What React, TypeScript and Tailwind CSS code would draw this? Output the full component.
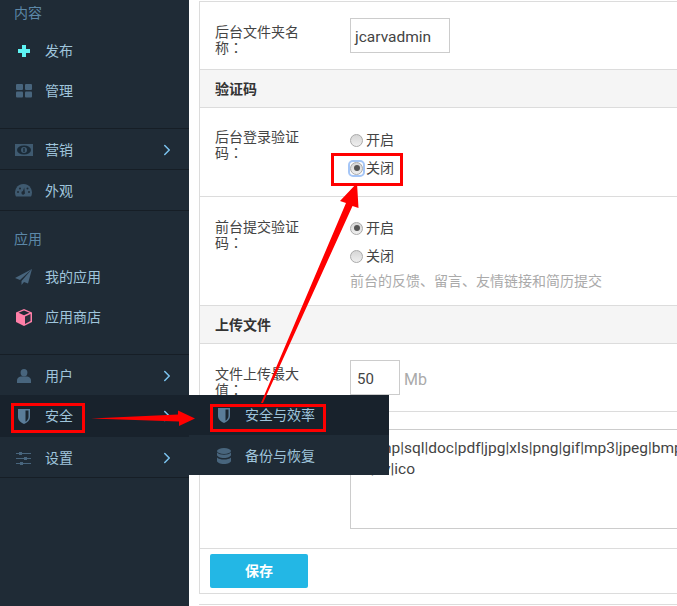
import { ChevronRight } from "lucide-react";
import { ReactNode } from "react";

const FONT = "font-['Roboto','Noto_Sans_CJK_SC',sans-serif]";

const PlusIcon = () => (
  <svg width="14" height="14" viewBox="0 0 14 14">
    <path d="M5 1h4v4h4v4H9v4H5V9H1V5h4z" fill="#5ef3f3" />
  </svg>
);
const GridIcon = () => (
  <svg width="16" height="14" viewBox="0 0 16 14" fill="#48657d">
    <rect x="0" y="0" width="7" height="6" rx="1" />
    <rect x="9" y="0" width="7" height="6" rx="1" />
    <rect x="0" y="7.500" width="7" height="6" rx="1" />
    <rect x="9" y="7.500" width="7" height="6" rx="1" />
  </svg>
);
const MoneyIcon = () => (
  <svg width="18" height="12" viewBox="0 0 18 12">
    <rect width="18" height="12" fill="#3f5a70" />
    <ellipse cx="9" cy="6" rx="7" ry="4.500" fill="#1a2a37" />
    <circle cx="9" cy="6" r="3" fill="#3f5a70" />
    <rect x="8.300" y="4" width="1.400" height="4" fill="#1a2a37" />
  </svg>
);
const GaugeIcon = () => (
  <svg width="17" height="13" viewBox="0 0 17 13">
    <path d="M1 12.500A8.500 8.500 0 1 1 16 12.500z" fill="#3f5a70" />
    <path d="M8 7l1.200-3.500L9.800 8a1.800 1.800 0 1 1-1.800-1z" fill="#1f2b36" />
    <circle cx="3" cy="8" r="1" fill="#1f2b36" />
    <circle cx="5" cy="4.500" r="1" fill="#1f2b36" />
    <circle cx="12.500" cy="4.500" r="1" fill="#1f2b36" />
    <circle cx="14" cy="8" r="1" fill="#1f2b36" />
  </svg>
);
const PlaneIcon = () => (
  <svg width="17" height="16" viewBox="0 0 17 16">
    <path d="M17 0L0 9l5 2zM17 0L6.500 12v4l2.500-3 4 1.500z" fill="#48657d" />
  </svg>
);
const BoxIcon = () => (
  <svg width="16" height="17" viewBox="0 0 16 17">
    <path d="M8 0l8 3.500v9.500l-8 4-8-4V3.500z" fill="#ff7fa8" />
    <path d="M8 1.500l5.500 2.300L8 6.200 2.500 3.800z" fill="#1f2b36" />
    <path d="M9 7.500l5.500-2.400v7L9 15z" fill="#2b2f3c" />
  </svg>
);
const UserIcon = () => (
  <svg width="14" height="14" viewBox="0 0 14 14" fill="#48657d">
    <ellipse cx="7" cy="3.700" rx="3.400" ry="3.700" />
    <path d="M0 14v-2.500C0 9 2.500 7.600 4.500 7.600h5c2 0 4.500 1.400 4.500 3.900V14z" />
  </svg>
);
const ShieldIcon = () => (
  <svg width="12" height="15" viewBox="0 0 12 15">
    <path d="M0 0h12v8C12 11.500 8.500 14 6 15 3.500 14 0 11.500 0 8z" fill="#5a7d99" />
    <path d="M7.500 1.500h3V8c0 2-1.500 3.800-3 4.800z" fill="#1a2630" />
  </svg>
);
const SlidersIcon = () => (
  <svg width="15" height="13" viewBox="0 0 15 13" fill="#48657d">
    <rect y="1" width="15" height="1" />
    <rect x="3" y="0" width="3" height="3" />
    <rect y="6" width="15" height="1" />
    <rect x="8" y="5" width="3" height="3" />
    <rect y="11" width="15" height="1" />
    <rect x="4" y="10" width="3" height="3" />
  </svg>
);
const DatabaseIcon = () => (
  <svg width="14" height="16" viewBox="0 0 14 16" fill="#48657d">
    <ellipse cx="7" cy="3" rx="7" ry="3" />
    <path d="M0 4.600C1.500 6.200 4 6.800 7 6.800s5.500-.6 7-2.200V7c0 1.500-3 3-7 3S0 8.500 0 7z" />
    <path d="M0 9.400C1.500 11 4 11.400 7 11.400s5.500-.4 7-2V13c0 1.500-3 3-7 3s-7-1.500-7-3z" />
  </svg>
);

const NavItem = ({
  icon,
  label,
  arrow,
  className,
}: {
  icon: ReactNode;
  label: string;
  arrow?: boolean;
  className?: string;
}) => (
  <div className={`flex items-center text-sm text-[#9fc5dc] ${className}`}>
    <div className="flex w-[45px] shrink-0 justify-center pl-[2px]">{icon}</div>
    <span>{label}</span>
    {arrow && (
      <ChevronRight
        size={18}
        strokeWidth={2}
        className="ml-auto mr-[13px] text-[#7cc4f0]"
      />
    )}
  </div>
);

const Sidebar = () => (
  <aside className="flex w-[189px] shrink-0 flex-col bg-[#1f2b36]">
    <div className="h-[129px] border-b border-[#161e26]">
      <div className="pl-[14px] pt-[3px] text-sm leading-5 text-[#5c88a8]">内容</div>
      <NavItem icon={<PlusIcon />} label="发布" className="mt-[8px] h-[40px]" />
      <NavItem icon={<GridIcon />} label="管理" className="h-[40px]" />
    </div>
    <NavItem icon={<MoneyIcon />} label="营销" arrow className="h-[41px] border-b border-[#161e26] pt-[1px]" />
    <NavItem icon={<GaugeIcon />} label="外观" className="h-[41px] border-b border-[#161e26] pt-[1px]" />
    <div className="h-[144px] border-b border-[#161e26]">
      <div className="pl-[14px] pt-[18px] text-sm leading-5 text-[#5c88a8]">应用</div>
      <NavItem icon={<PlaneIcon />} label="我的应用" className="mt-[8px] h-[40px]" />
      <NavItem icon={<BoxIcon />} label="应用商店" className="h-[40px]" />
    </div>
    <NavItem icon={<UserIcon />} label="用户" arrow className="h-[40px] pt-[1px]" />
    <NavItem icon={<ShieldIcon />} label="安全" arrow className="h-[42px] bg-[#18222c]" />
    <NavItem icon={<SlidersIcon />} label="设置" arrow className="h-[41px] border-b border-[#161e26] pt-[2px]" />
  </aside>
);

const Radio = ({ label, checked, focus }: { label: string; checked?: boolean; focus?: boolean }) => (
  <div className="flex h-[28px] items-center text-sm text-[#444]">
    <span className={`mr-[3px] flex h-[13px] w-[13px] items-center justify-center rounded-[3px] ${focus ? "outline-2 outline-[#a5c6f7]" : ""}`}>
      <span className="flex h-[13px] w-[13px] items-center justify-center rounded-full border border-[#aaa] bg-linear-to-b from-[#d6d6d6] to-[#efefef]">
        {checked && <span className="h-[6px] w-[6px] rounded-full bg-[#555]" />}
      </span>
    </span>
    {label}
  </div>
);

const Label = ({ first, second, offset }: { first: string; second: string; offset: string }) => (
  <div className={`w-[88px] shrink-0 text-sm leading-[16px] text-[#444] ${offset}`}>
    <div>{first}</div>
    <div>
      {second}
      <span className="font-['Roboto','Noto_Sans_CJK_TC',sans-serif]">：</span>
    </div>
  </div>
);

const SectionHead = ({ children }: { children: ReactNode }) => (
  <div className="flex h-[38px] items-center border-b border-[#dcdcdc] bg-[#f5f5f5] pl-[15px] text-sm font-bold text-[#333]">
    {children}
  </div>
);

const Overlay = () => (
  <>
    <div className="absolute left-[331px] top-[153px] h-[33px] w-[72px] border-[3px] border-[#f00]" />
    <div className="absolute left-[11px] top-[403px] h-[30px] w-[74px] border-[3px] border-[#f00]" />
    <div className="absolute left-[210px] top-[404px] h-[28px] w-[116px] border-[3px] border-[#f00]" />
    <svg className="absolute left-0 top-0" width="677" height="606" viewBox="0 0 677 606">
      <path d="M91 418.500L178 414.500V410.500L195 418.500L179 426V421.500z" fill="#f00" />
      <path d="M261 403L346 203L340 201L357 183L358.500 208L352.500 206L263 403z" fill="#f00" />
    </svg>
  </>
);

export default function App() {
  return (
    <div className={`relative flex h-[606px] w-[677px] overflow-hidden bg-white ${FONT}`}>
      <Sidebar />
      <main className="ml-[10px] min-w-0 flex-1">
        <div className="mt-[1px] h-[593px] border-b border-l border-t border-[#dcdcdc]">
          <div className="flex h-[68px] items-center border-b border-[#dcdcdc] pl-[15px]">
            <Label first="后台文件夹名" second="称" offset="pt-[8px]" />
            <div className="ml-[47px] flex h-[35px] w-[100px] items-center border border-[#ccc] px-[4px] pt-[4px] text-[15.5px] text-[#444]">
              jcarvadmin
            </div>
          </div>
          <SectionHead>验证码</SectionHead>
          <div className="flex h-[89px] border-b border-[#dcdcdc] pl-[15px] pt-[18px]">
            <Label first="后台登录验证" second="码" offset="pt-[3px]" />
            <div className="ml-[47px]">
              <Radio label="开启" />
              <Radio label="关闭" checked focus />
            </div>
          </div>
          <div className="flex h-[109px] border-b border-[#dcdcdc] pl-[15px] pt-[17px]">
            <Label first="前台提交验证" second="码" offset="pt-[5px]" />
            <div className="ml-[47px]">
              <Radio label="开启" checked />
              <Radio label="关闭" />
              <div className="mt-[1px] text-sm leading-5 text-[#aaa]">前台的反馈、留言、友情链接和简历提交</div>
            </div>
          </div>
          <SectionHead>上传文件</SectionHead>
          <div className="flex h-[68px] items-center border-b border-[#dcdcdc] pl-[15px]">
            <Label first="文件上传最大" second="值" offset="pt-[8px]" />
            <div className="ml-[47px] flex h-[35px] w-[50px] items-center border border-[#ccc] px-[6px] pt-[4px] text-[15px] text-[#444]">
              50
            </div>
            <span className="ml-[4px] pt-[4px] text-base text-[#aaa]">Mb</span>
          </div>
          <div className="h-[137px] border-b border-[#dcdcdc] pl-[150px] pt-[17px]">
            <div className="h-[100px] overflow-hidden whitespace-nowrap border-y border-l border-[#ccc] px-[3px] pt-[8px] text-[15.5px] leading-[21px] text-[#444]">
              7z|php|sql|doc|pdf|jpg|xls|png|gif|mp3|jpeg|bmp|
              <br />
              7z|flv|ico
            </div>
          </div>
          <div className="pl-[10px] pt-[5px]">
            <button className="h-[34px] w-[98px] rounded-[2px] bg-[#23b7e5] text-sm font-bold text-white">保存</button>
          </div>
        </div>
        <div className="mt-[10px] border-b border-[#dcdcdc]" />
      </main>
      <div className="absolute left-[189px] top-[395px] w-[200px]">
        <NavItem icon={<ShieldIcon />} label="安全与效率" className="h-[40px] bg-[#18222c] pl-[11px]" />
        <NavItem icon={<DatabaseIcon />} label="备份与恢复" className="h-[40px] bg-[#1f2b36] pl-[11px] pt-[2px]" />
      </div>
      <Overlay />
    </div>
  );
}
